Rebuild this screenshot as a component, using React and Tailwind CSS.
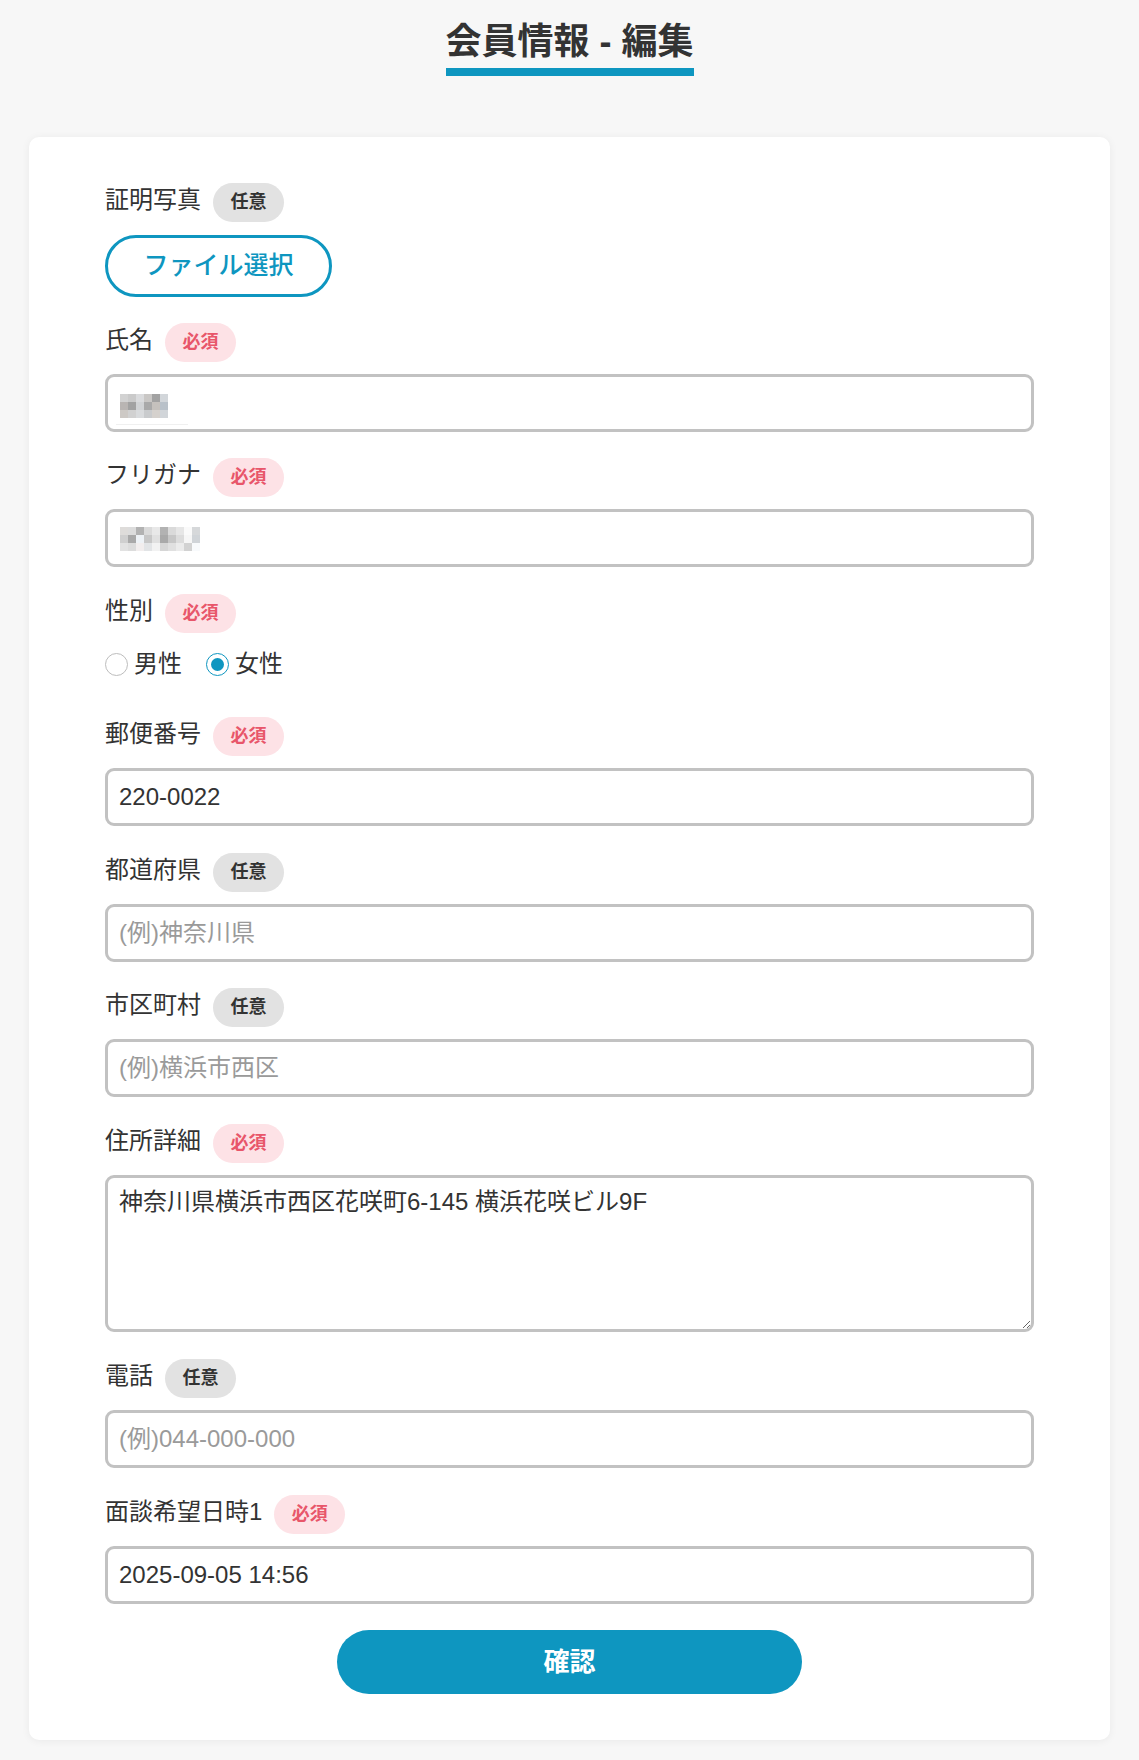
import React from "react";

const FONT = { fontFamily: '"Liberation Sans", "Noto Sans CJK JP", sans-serif' };

function Badge({ req }) {
  return req ? (
    <span className="inline-flex items-center justify-center h-[39px] w-[71px] rounded-full bg-[#fde2e6] text-[#e8566a] text-[18px] font-bold">
      必須
    </span>
  ) : (
    <span className="inline-flex items-center justify-center h-[39px] w-[71px] rounded-full bg-[#e2e2e2] text-[#333] text-[18px] font-bold">
      任意
    </span>
  );
}

function Label({ text, req, className = "" }) {
  return (
    <div className={"flex items-center gap-[12px] h-[39px] " + className}>
      <span className="text-[24px] text-[#333] leading-none pb-[5px]">{text}</span>
      <Badge req={req} />
    </div>
  );
}

const inputCls =
  "block w-full h-[58px] border-[3px] border-[#c2c2c2] rounded-[9px] px-[11px] text-[24px] text-[#333] bg-white outline-none placeholder:text-[#9a9a9a]";

function Mosaic({ rows }) {
  return (
    <div className="flex flex-col">
      {rows.map((r, i) => (
        <div key={i} className="flex">
          {r.map((c, j) => (
            <div key={j} className="w-[8px] h-[8px]" style={{ background: c }} />
          ))}
        </div>
      ))}
    </div>
  );
}

const nameRows = [
  ["#d2d2d2", "#cacaca", "#dadbdd", "#c9c7c5", "#a2a2a2", "#d2d6da"],
  ["#b9b5b3", "#a2a2a2", "#d1d3d5", "#a9a9a9", "#c5c1bd", "#b9c1c9"],
  ["#cdc9c5", "#d1d1d1", "#d9dbdd", "#c9cbcd", "#d5d1cd", "#d1d5d9"],
];

const kanaRows = [
  ["#dedcda", "#dcdcdc", "#b2b2b2", "#dadada", "#e8e8e8", "#b2b2b2", "#dadada", "#e6e6e6", "#fafafa", "#d6d8da", "#ffffff"],
  ["#cfcfcf", "#a9a9a9", "#eef2f6", "#c7c7c7", "#e0e0e0", "#a9a9a9", "#c7c7c7", "#dcdcdc", "#f6f6f6", "#d0d4d8", "#ffffff"],
  ["#e2e2e2", "#dcdcdc", "#f2eeee", "#e2e4e6", "#f2f2f2", "#d6d6d6", "#e0e0e0", "#ebebeb", "#d2d2d2", "#f8fafc", "#ffffff"],
];

function Radio({ checked, label }) {
  return (
    <label className="flex items-center gap-[6px]">
      {checked ? (
        <span className="w-[23px] h-[23px] rounded-full border border-[#0e96c0] flex items-center justify-center bg-white">
          <span className="w-[13px] h-[13px] rounded-full bg-[#0e96c0]" />
        </span>
      ) : (
        <span className="w-[23px] h-[23px] rounded-full border border-[#bdbdbd] bg-white" />
      )}
      <span className="text-[24px] text-[#333] leading-none">{label}</span>
    </label>
  );
}

export default function App() {
  return (
    <div className="min-h-[1760px] bg-[#f7f7f7] pb-[22px]" style={FONT}>
      <div className="flex justify-center pt-[19px]">
        <h1 className="inline-block text-[36px] leading-[46px] font-bold text-[#333] border-b-[8px] border-[#0e96c0] pb-[3px]">
          会員情報 - 編集
        </h1>
      </div>

      <div className="mx-[29px] mt-[61px] bg-white rounded-[10px] shadow-[0_1px_8px_rgba(0,0,0,0.06)] pt-[46px] px-[76px] pb-[46px]">
        <Label text="証明写真" />
        <button className="mt-[13px] w-[227px] h-[62px] border-[3px] border-[#0e96c0] rounded-full text-[25px] font-medium text-[#0e96c0] bg-white flex items-center justify-center">
          ファイル選択
        </button>

        <Label text="氏名" req className="mt-[26px]" />
        <div className={inputCls + " mt-[12px] flex items-center relative"}>
          <div className="ml-[1px] mt-[6px]">
            <Mosaic rows={nameRows} />
          </div>
          <div className="absolute left-[8px] top-[47px] w-[72px] h-[1px] bg-[#f0f0f0]" />
        </div>

        <Label text="フリガナ" req className="mt-[26px]" />
        <div className={inputCls + " mt-[12px] flex items-center"}>
          <div className="ml-[1px] mt-[1px]">
            <Mosaic rows={kanaRows} />
          </div>
        </div>

        <Label text="性別" req className="mt-[27px]" />
        <div className="mt-[19px] flex items-center gap-[24px] h-[24px]">
          <Radio label="男性" />
          <Radio checked label="女性" />
        </div>

        <Label text="郵便番号" req className="mt-[41px]" />
        <input className={inputCls + " mt-[12px]"} defaultValue="220-0022" />

        <Label text="都道府県" className="mt-[27px]" />
        <input className={inputCls + " mt-[12px]"} placeholder="(例)神奈川県" />

        <Label text="市区町村" className="mt-[26px]" />
        <input className={inputCls + " mt-[12px]"} placeholder="(例)横浜市西区" />

        <Label text="住所詳細" req className="mt-[27px]" />
        <textarea
          className="block w-full h-[157px] mt-[12px] border-[3px] border-[#c2c2c2] rounded-[9px] px-[11px] py-[8px] text-[24px] leading-[32px] text-[#333] bg-white outline-none"
          defaultValue="神奈川県横浜市西区花咲町6-145 横浜花咲ビル9F"
        />

        <Label text="電話" className="mt-[27px]" />
        <input className={inputCls + " mt-[12px]"} placeholder="(例)044-000-000" />

        <Label text="面談希望日時1" req className="mt-[27px]" />
        <input className={inputCls + " mt-[12px]"} defaultValue="2025-09-05 14:56" />

        <button className="mt-[26px] mx-auto block w-[465px] h-[64px] rounded-full bg-[#0e96c0] text-white text-[26px] font-bold">
          確認
        </button>
      </div>
    </div>
  );
}
